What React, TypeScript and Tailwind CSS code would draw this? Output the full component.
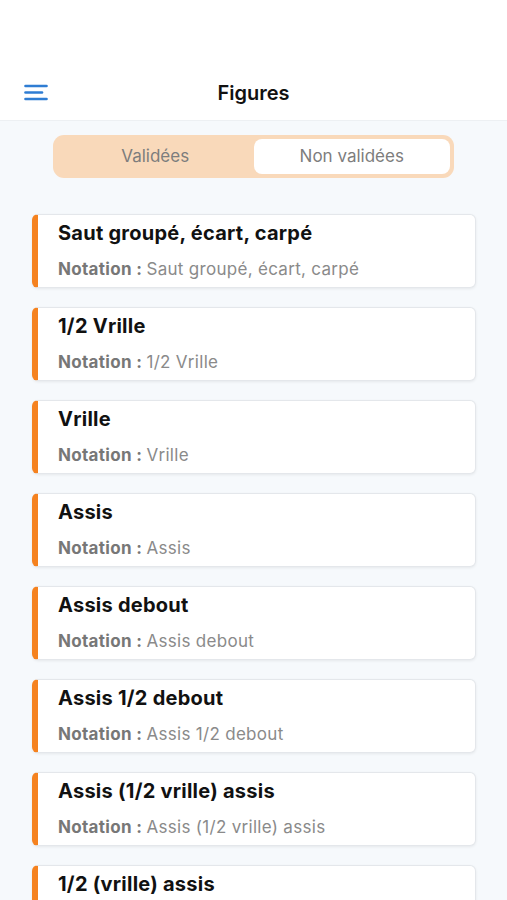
import { useState } from "react";

type Figure = { name: string; notation: string };

const figures: Array<Figure> = [
  { name: "Saut groupé, écart, carpé", notation: "Saut groupé, écart, carpé" },
  { name: "1/2 Vrille", notation: "1/2 Vrille" },
  { name: "Vrille", notation: "Vrille" },
  { name: "Assis", notation: "Assis" },
  { name: "Assis debout", notation: "Assis debout" },
  { name: "Assis 1/2 debout", notation: "Assis 1/2 debout" },
  { name: "Assis (1/2 vrille) assis", notation: "Assis (1/2 vrille) assis" },
  { name: "1/2 (vrille) assis", notation: "1/2 (vrille) assis" },
];

const MenuIcon = () => (
  <svg width="24" height="18" viewBox="0 0 24 18" fill="none">
    <path d="M1.5 2h21" stroke="#2f7dd3" strokeWidth="2.6" strokeLinecap="round" />
    <path d="M1.5 8.5h16.5" stroke="#2f7dd3" strokeWidth="2.6" strokeLinecap="round" />
    <path d="M1.5 15h21" stroke="#2f7dd3" strokeWidth="2.6" strokeLinecap="round" />
  </svg>
);

export default function App() {
  const [tab, setTab] = useState("non");

  return (
    <div className="h-[900px] overflow-hidden bg-[#f6f9fc] font-['Inter',sans-serif]">
      {/* header */}
      <div className="bg-white pt-[66px] border-b border-[#edf0f3]">
        <div className="relative flex h-[54px] items-center justify-center">
          <button className="absolute left-[24px] top-[18px]">
            <MenuIcon />
          </button>
          <h1 className="text-[20px] leading-[28px] font-semibold text-[#111]">Figures</h1>
        </div>
      </div>

      {/* segmented control */}
      <div className="mx-[53px] mt-[14px] flex h-[43px] rounded-[11px] bg-[#f9d9ba] p-[4px]">
        <button
          onClick={() => setTab("val")}
          className={`flex-1 rounded-[8px] text-[17px] text-[#7d7d7d] ${tab === "val" ? "bg-white" : ""}`}
        >
          Validées
        </button>
        <button
          onClick={() => setTab("non")}
          className={`flex-1 rounded-[8px] text-[17px] text-[#7d7d7d] ${tab === "non" ? "bg-white" : ""}`}
        >
          Non validées
        </button>
      </div>

      {/* list */}
      <div className="mt-[36px] flex flex-col gap-[19px] pl-[32px] pr-[31px]">
        {figures.map((f, i) => (
          <div
            key={i}
            className="h-[74px] shrink-0 rounded-[6px] border border-[#e4e7eb] border-l-[6px] border-l-[#f5821f] bg-white pl-[20px] pt-[6px] shadow-[0_1px_3px_rgba(0,0,0,0.07)]"
          >
            <div className="text-[20px] leading-[24px] tracking-[0.25px] font-bold text-[#111]">{f.name}</div>
            <div className="mt-[14px] text-[17px] leading-[20px] tracking-[0.3px] text-[#8a8a8a]">
              <span className="font-bold text-[#777]">Notation : </span>
              {f.notation}
            </div>
          </div>
        ))}
      </div>
    </div>
  );
}
